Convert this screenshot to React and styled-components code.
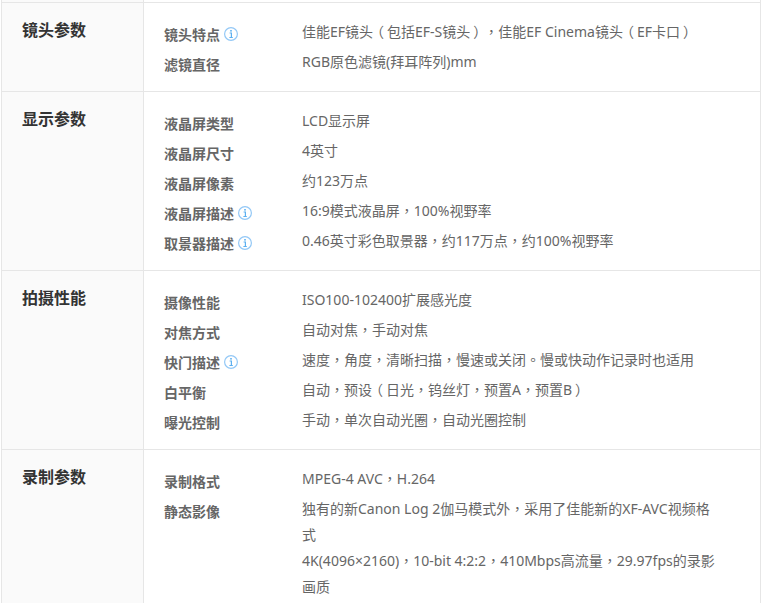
import React from "react";
import styled, { createGlobalStyle } from "styled-components";

const GlobalStyle = createGlobalStyle`
  html, body {
    margin: 0;
    padding: 0;
    background: #fff;
  }
  body {
    font-family: "Noto Sans", "Noto Sans CJK SC", sans-serif;
  }
`;

const Page = styled.div`
  width: 763px;
  height: 603px;
  overflow: hidden;
  box-sizing: border-box;
  padding: 0 1px;
`;

const Table = styled.div`
  width: 760px;
  border-left: 1px solid #e6e6e6;
  border-right: 1px solid #e6e6e6;
  box-sizing: border-box;
`;

/* bottom of the section scrolled off above the crop */
const CutOffRow = styled.div`
  width: 142px;
  height: 2px;
  box-sizing: border-box;
  background: #fafafa;
  border-right: 1px solid #e6e6e6;
`;

const Section = styled.section`
  display: grid;
  grid-template-columns: 142px 1fr;
  border-top: 1px solid #e6e6e6;
`;

const Heading = styled.h3`
  margin: 0;
  padding: 14px 0 0 20px;
  background: #fafafa;
  border-right: 1px solid #e6e6e6;
  color: #333;
  font-size: 16px;
  font-weight: bold;
  line-height: 26px;
`;

const List = styled.dl`
  margin: 0;
  padding: 16px 0 12px 20px;
`;

const Item = styled.div`
  display: grid;
  grid-template-columns: 138px 420px;
  padding-bottom: 4px;
`;

const Label = styled.dt`
  display: flex;
  align-items: center;
  gap: 4px;
  height: 26px;
  box-sizing: border-box;
  padding-top: 3px;
  color: #666;
  font-size: 14px;
  font-weight: bold;
`;

const Value = styled.dd`
  margin: 0;
  color: #666;
  font-size: 14px;
  line-height: 26px;
  text-spacing-trim: space-all;
`;

const Punct = styled.span`
  font-family: "Noto Sans CJK TC", sans-serif;
  line-height: 0;
  margin-left: ${(p) => p.$shift || 0}px;
  margin-right: ${(p) => -(p.$shift || 0)}px;
`;

const InfoIcon = () => (
  <svg width="14" height="14" viewBox="0 0 14 14" fill="none">
    <circle cx="7" cy="7" r="6.4" stroke="#93c8f6" strokeWidth="1.2" />
    <rect x="6.2" y="3" width="1.6" height="1.6" fill="#5cb0f0" />
    <path d="M5.6 6H7.4V10.3M5.4 10.5H8.8" stroke="#5cb0f0" strokeWidth="1.2" />
  </svg>
);

// full-width punctuation sits in the middle of its cell in the reference
const parenShift = { "（": -3, "）": 3 };

const withPunct = (text) =>
  text.split(/([，（）。])/).map((part, i) =>
    i % 2 ? <Punct key={i} $shift={parenShift[part]}>{part}</Punct> : part
  );

const sections = [
  {
    title: "镜头参数",
    items: [
      { label: "镜头特点", info: true, value: "佳能EF镜头（包括EF-S镜头），佳能EF Cinema镜头（EF卡口）" },
      { label: "滤镜直径", value: "RGB原色滤镜(拜耳阵列)mm" },
    ],
  },
  {
    title: "显示参数",
    items: [
      { label: "液晶屏类型", value: "LCD显示屏" },
      { label: "液晶屏尺寸", value: "4英寸" },
      { label: "液晶屏像素", value: "约123万点" },
      { label: "液晶屏描述", info: true, value: "16:9模式液晶屏，100%视野率" },
      { label: "取景器描述", info: true, value: "0.46英寸彩色取景器，约117万点，约100%视野率" },
    ],
  },
  {
    title: "拍摄性能",
    items: [
      { label: "摄像性能", value: "ISO100-102400扩展感光度" },
      { label: "对焦方式", value: "自动对焦，手动对焦" },
      { label: "快门描述", info: true, value: "速度，角度，清晰扫描，慢速或关闭。慢或快动作记录时也适用" },
      { label: "白平衡", value: "自动，预设（日光，钨丝灯，预置A，预置B）" },
      { label: "曝光控制", value: "手动，单次自动光圈，自动光圈控制" },
    ],
  },
  {
    title: "录制参数",
    items: [
      { label: "录制格式", value: "MPEG-4 AVC，H.264" },
      {
        label: "静态影像",
        value: [
          "独有的新Canon Log 2伽马模式外，采用了佳能新的XF-AVC视频格式",
          "4K(4096×2160)，10-bit 4:2:2，410Mbps高流量，29.97fps的录影画质",
        ],
      },
    ],
  },
];

export default function App() {
  return (
    <Page>
      <GlobalStyle />
      <Table>
        <CutOffRow />
        {sections.map((section) => (
          <Section key={section.title}>
            <Heading>{section.title}</Heading>
            <List>
              {section.items.map((item) => (
                <Item key={item.label}>
                  <Label>
                    {item.label}
                    {item.info && <InfoIcon />}
                  </Label>
                  <Value>
                    {[].concat(item.value).map((line) => (
                      <div key={line}>{withPunct(line)}</div>
                    ))}
                  </Value>
                </Item>
              ))}
            </List>
          </Section>
        ))}
      </Table>
    </Page>
  );
}
